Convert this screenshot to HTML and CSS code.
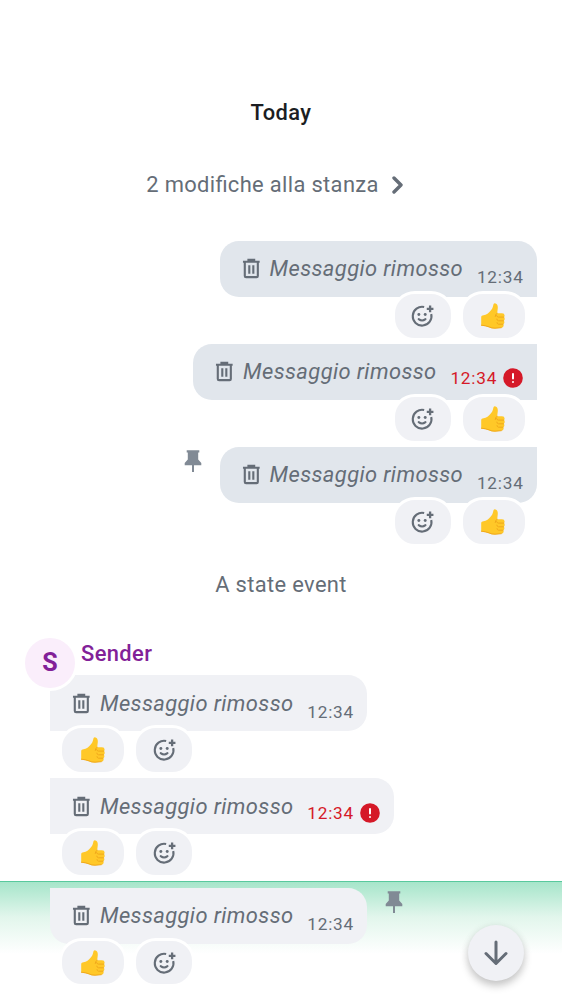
FILE: index.html
```
<!DOCTYPE html>
<html lang="it">
<head>
<meta charset="utf-8">
<title>Timeline</title>
<link rel="stylesheet" href="styles.css">
</head>
<body>
<svg class="defs" aria-hidden="true">
  <symbol id="trash" viewBox="0 0 24 24"><path fill="none" stroke="currentColor" stroke-width="2.200" d="M5 5.500v14.200q0 1.300 1.300 1.300h11q1.300 0 1.300-1.300V5.500M3.100 5h17.400M8.800 4V3h6v1M9.700 8.500v9M13.900 8.500v9"/></symbol>
  <symbol id="smile" viewBox="0 0 24 24"><path fill="none" stroke="currentColor" stroke-width="2" d="M13.600 3.900A9 9 0 1 0 20.400 10.600"/><path fill="none" stroke="currentColor" stroke-width="2.200" d="M19.300 2.400v6.400M16.100 5.600h6.400"/><circle cx="8.500" cy="11" r="1.400" fill="currentColor"/><circle cx="14.600" cy="11" r="1.400" fill="currentColor"/><path fill="none" stroke="currentColor" stroke-width="1.900" stroke-linecap="round" d="M8.300 15.500q3.300 2.500 6.600 0"/></symbol>
  <symbol id="pin" viewBox="0 0 18 24"><path fill="currentColor" d="M2.700 1.200h12.600v2.200h-1.100v7.200l3.100 3.300v2.300h-7.300V23H8v-6.800H.7v-2.300l3.100-3.300V3.400H2.700z"/></symbol>
  <symbol id="error" viewBox="0 0 20 20"><circle cx="10" cy="10" r="9.800" fill="#d51928"/><path stroke="#fff" stroke-width="2" stroke-linecap="round" d="M10 6v4.500M10 14v.01"/></symbol>
  <symbol id="thumb" viewBox="0 0 24 26"><path fill="#ffc828" d="M.2 14Q.2 12.600 1.500 12.500 5 12 6.500 10.700C9.300 8.400 11.200 6.300 11.800 4L12.500 1.300Q13 .1 14.500.4C16.200.9 17 2.600 16.800 5L16.200 10.300H21q2.600.1 2.600 2.100 0 1-.7 1.600.9.700.8 1.900 0 1.200-1 1.800.8.700.7 1.800-.1 1.200-1.200 1.700.6.700.4 1.700-.3 1.700-2.400 1.900L14 25.600q-3.500.2-6-1.300-3-1.300-7.800-1.700z"/><path fill="none" stroke="#eea51a" stroke-width=".9" stroke-linecap="round" d="M16.200 10.300q-2.200.7-2 3.200M22.700 14.100h-5.200q-1.800-.1-2-1.500M22.500 17.800h-5q-1.600-.2-1.700-1.700M22 21.200h-4.500q-1.400-.2-1.500-1.600M20.300 24.700l-6.300.5q-3.300 0-6-1.300-3-1.300-7.600-1.700"/></symbol>
</svg>
<main class="timeline">
  <h1 class="day">Today</h1>
  <div class="changes"><span>2 modifiche alla stanza</span><svg viewBox="0 0 12 20"><path d="M2 3l7 7-7 7"/></svg></div>

  <section class="group mine">
    <article class="message">
      <div class="bubble first"><svg class="trash"><use href="#trash"/></svg><span class="text">Messaggio rimosso</span><time>12:34</time></div>
      <div class="reactions"><span class="pill add"><svg class="smile"><use href="#smile"/></svg></span><span class="pill like"><svg class="thumb"><use href="#thumb"/></svg></span></div>
    </article>
    <article class="message">
      <div class="bubble middle"><svg class="trash"><use href="#trash"/></svg><span class="text">Messaggio rimosso</span><time class="failed">12:34<svg><use href="#error"/></svg></time></div>
      <div class="reactions"><span class="pill add"><svg class="smile"><use href="#smile"/></svg></span><span class="pill like"><svg class="thumb"><use href="#thumb"/></svg></span></div>
    </article>
    <article class="message">
      <div class="row"><svg class="pin"><use href="#pin"/></svg><div class="bubble last"><svg class="trash"><use href="#trash"/></svg><span class="text">Messaggio rimosso</span><time>12:34</time></div></div>
      <div class="reactions"><span class="pill add"><svg class="smile"><use href="#smile"/></svg></span><span class="pill like"><svg class="thumb"><use href="#thumb"/></svg></span></div>
    </article>
  </section>

  <p class="event">A state event</p>

  <section class="group theirs">
    <header class="sender"><span class="avatar">S</span><span class="name">Sender</span></header>
    <article class="message">
      <div class="bubble middle"><svg class="trash"><use href="#trash"/></svg><span class="text">Messaggio rimosso</span><time>12:34</time></div>
      <div class="reactions"><span class="pill like"><svg class="thumb"><use href="#thumb"/></svg></span><span class="pill add"><svg class="smile"><use href="#smile"/></svg></span></div>
    </article>
    <article class="message">
      <div class="bubble middle"><svg class="trash"><use href="#trash"/></svg><span class="text">Messaggio rimosso</span><time class="failed">12:34<svg><use href="#error"/></svg></time></div>
      <div class="reactions"><span class="pill like"><svg class="thumb"><use href="#thumb"/></svg></span><span class="pill add"><svg class="smile"><use href="#smile"/></svg></span></div>
    </article>
    <article class="message highlighted">
      <div class="row"><div class="bubble last"><svg class="trash"><use href="#trash"/></svg><span class="text">Messaggio rimosso</span><time>12:34</time></div><svg class="pin"><use href="#pin"/></svg></div>
      <div class="reactions"><span class="pill like"><svg class="thumb"><use href="#thumb"/></svg></span><span class="pill add"><svg class="smile"><use href="#smile"/></svg></span></div>
    </article>
  </section>
  <button class="jump" aria-label="Scroll to bottom"><svg viewBox="0 0 24 26"><path d="M12 2v21M2 13.500l10 10 10-10"/></svg></button>
</main>
</body>
</html>
```
FILE: styles.css
```
* { box-sizing: border-box; }
body { margin: 0; background: #fff; font-family: Roboto, sans-serif; font-size: 21.9px; color: #656d77; overflow: hidden; }
svg { display: block; flex: none; }
.defs { position: absolute; width: 0; height: 0; }
.timeline { position: relative; height: 1000px; padding-top: 97px; overflow: hidden; }
.day { margin: 0; height: 31px; line-height: 31px; text-align: center; font-size: 21.9px; font-weight: 500; letter-spacing: .39px; color: #1b1d22; }
.changes { display: flex; justify-content: center; align-items: center; gap: 13px; height: 31px; margin-top: 41px; padding-right: 12px; letter-spacing: .35px; font-feature-settings: "liga" 1; }
.changes svg { width: 12px; height: 20px; fill: none; stroke: currentColor; stroke-width: 3.400; stroke-linecap: round; stroke-linejoin: round; }
.group { display: flex; flex-direction: column; }
.mine { margin-top: 41px; padding-right: 25px; align-items: flex-end; }
.mine .message { height: 103.100px; display: flex; flex-direction: column; align-items: flex-end; }
.bubble { display: flex; height: 56px; padding: 0 13.400px 0 20px; background: #e1e6ec; }
.mine .first { border-radius: 19px 19px 0 19px; }
.mine .middle { border-radius: 19px 0 0 19px; }
.mine .last { border-radius: 19px 0 19px 19px; }
.trash { width: 23px; height: 23px; margin-top: 16px; }
.text { width: 193px; margin-left: 7px; line-height: 56px; font-style: italic; letter-spacing: .39px; white-space: nowrap; }
time { display: flex; gap: 5px; margin-left: 14.300px; padding-top: 25px; height: 46px; line-height: 22px; font-size: 17.2px; letter-spacing: .78px; white-space: nowrap; }
time.failed { padding-top: 23px; padding-right: 1px; gap: 5.500px; color: #d51928; }
time svg { width: 20px; height: 20px; margin-top: 1px; }
.row { display: flex; }
.pin { width: 18px; height: 24px; color: #818a95; margin-top: 2px; }
.mine .pin { margin-right: 17.500px; }
.reactions { position: relative; display: flex; gap: 6px; margin-top: -6px; }
.mine .reactions { padding-right: 9.500px; }
.pill { display: flex; align-items: center; justify-content: center; height: 49.500px; border: 3px solid #fff; border-radius: 23px; background: #f0f1f5; }
.add { width: 62.500px; }
.like { width: 67.500px; }
.smile { width: 25px; height: 25px; margin-top: -1px; }
.thumb { width: 24px; height: 26px; margin-right: 1px; }
.event { margin: 19px 0 0; line-height: 31px; text-align: center; letter-spacing: .35px; }
.theirs { margin-top: 35px; }
.sender { position: relative; z-index: 1; display: flex; height: 40px; padding-left: 22px; }
.avatar { width: 56px; height: 56px; margin-top: -.5px; border: 3px solid #fff; border-radius: 50%; background: #faeefb; color: #822198; text-align: center; line-height: 50px; font-size: 25px; font-weight: 700; }
.name { margin: 4px 0 0 3px; line-height: 30px; color: #822198; font-weight: 500; letter-spacing: .39px; }
.theirs .message { height: 103.100px; display: flex; flex-direction: column; align-items: flex-start; padding-left: 50px; }
.theirs .bubble { background: #f0f1f5; }
.theirs .middle { border-radius: 0 19px 19px 0; }
.theirs .middle .text { line-height: 57px; }
.theirs .middle .trash { margin-top: 16.500px; }
.theirs .middle time { padding-top: 25.500px; }
.theirs .middle time.failed { padding-top: 23.700px; }
.theirs .last { border-radius: 0 19px 19px 19px; }
.theirs .reactions { padding-left: 9.400px; }
.theirs .highlighted { width: 100%; height: 119px; padding-top: 5.500px; border-top: 1px solid #58c99d; background: linear-gradient(#a6e5ca, #e2f6ec 35px, #fff 72px); }
.theirs .pin { margin-left: 17.700px; }
.jump { position: absolute; left: 468.400px; top: 925px; width: 56px; height: 56px; padding: 0; border: 0; border-radius: 50%; display: grid; place-items: center; background: #f0f1f5; color: #656d77; box-shadow: 0 5px 8px #0003, 0 1px 8px #00000012; }
.jump svg { width: 24px; height: 26px; fill: none; stroke: currentColor; stroke-width: 3; stroke-linecap: round; stroke-linejoin: round; }
```
